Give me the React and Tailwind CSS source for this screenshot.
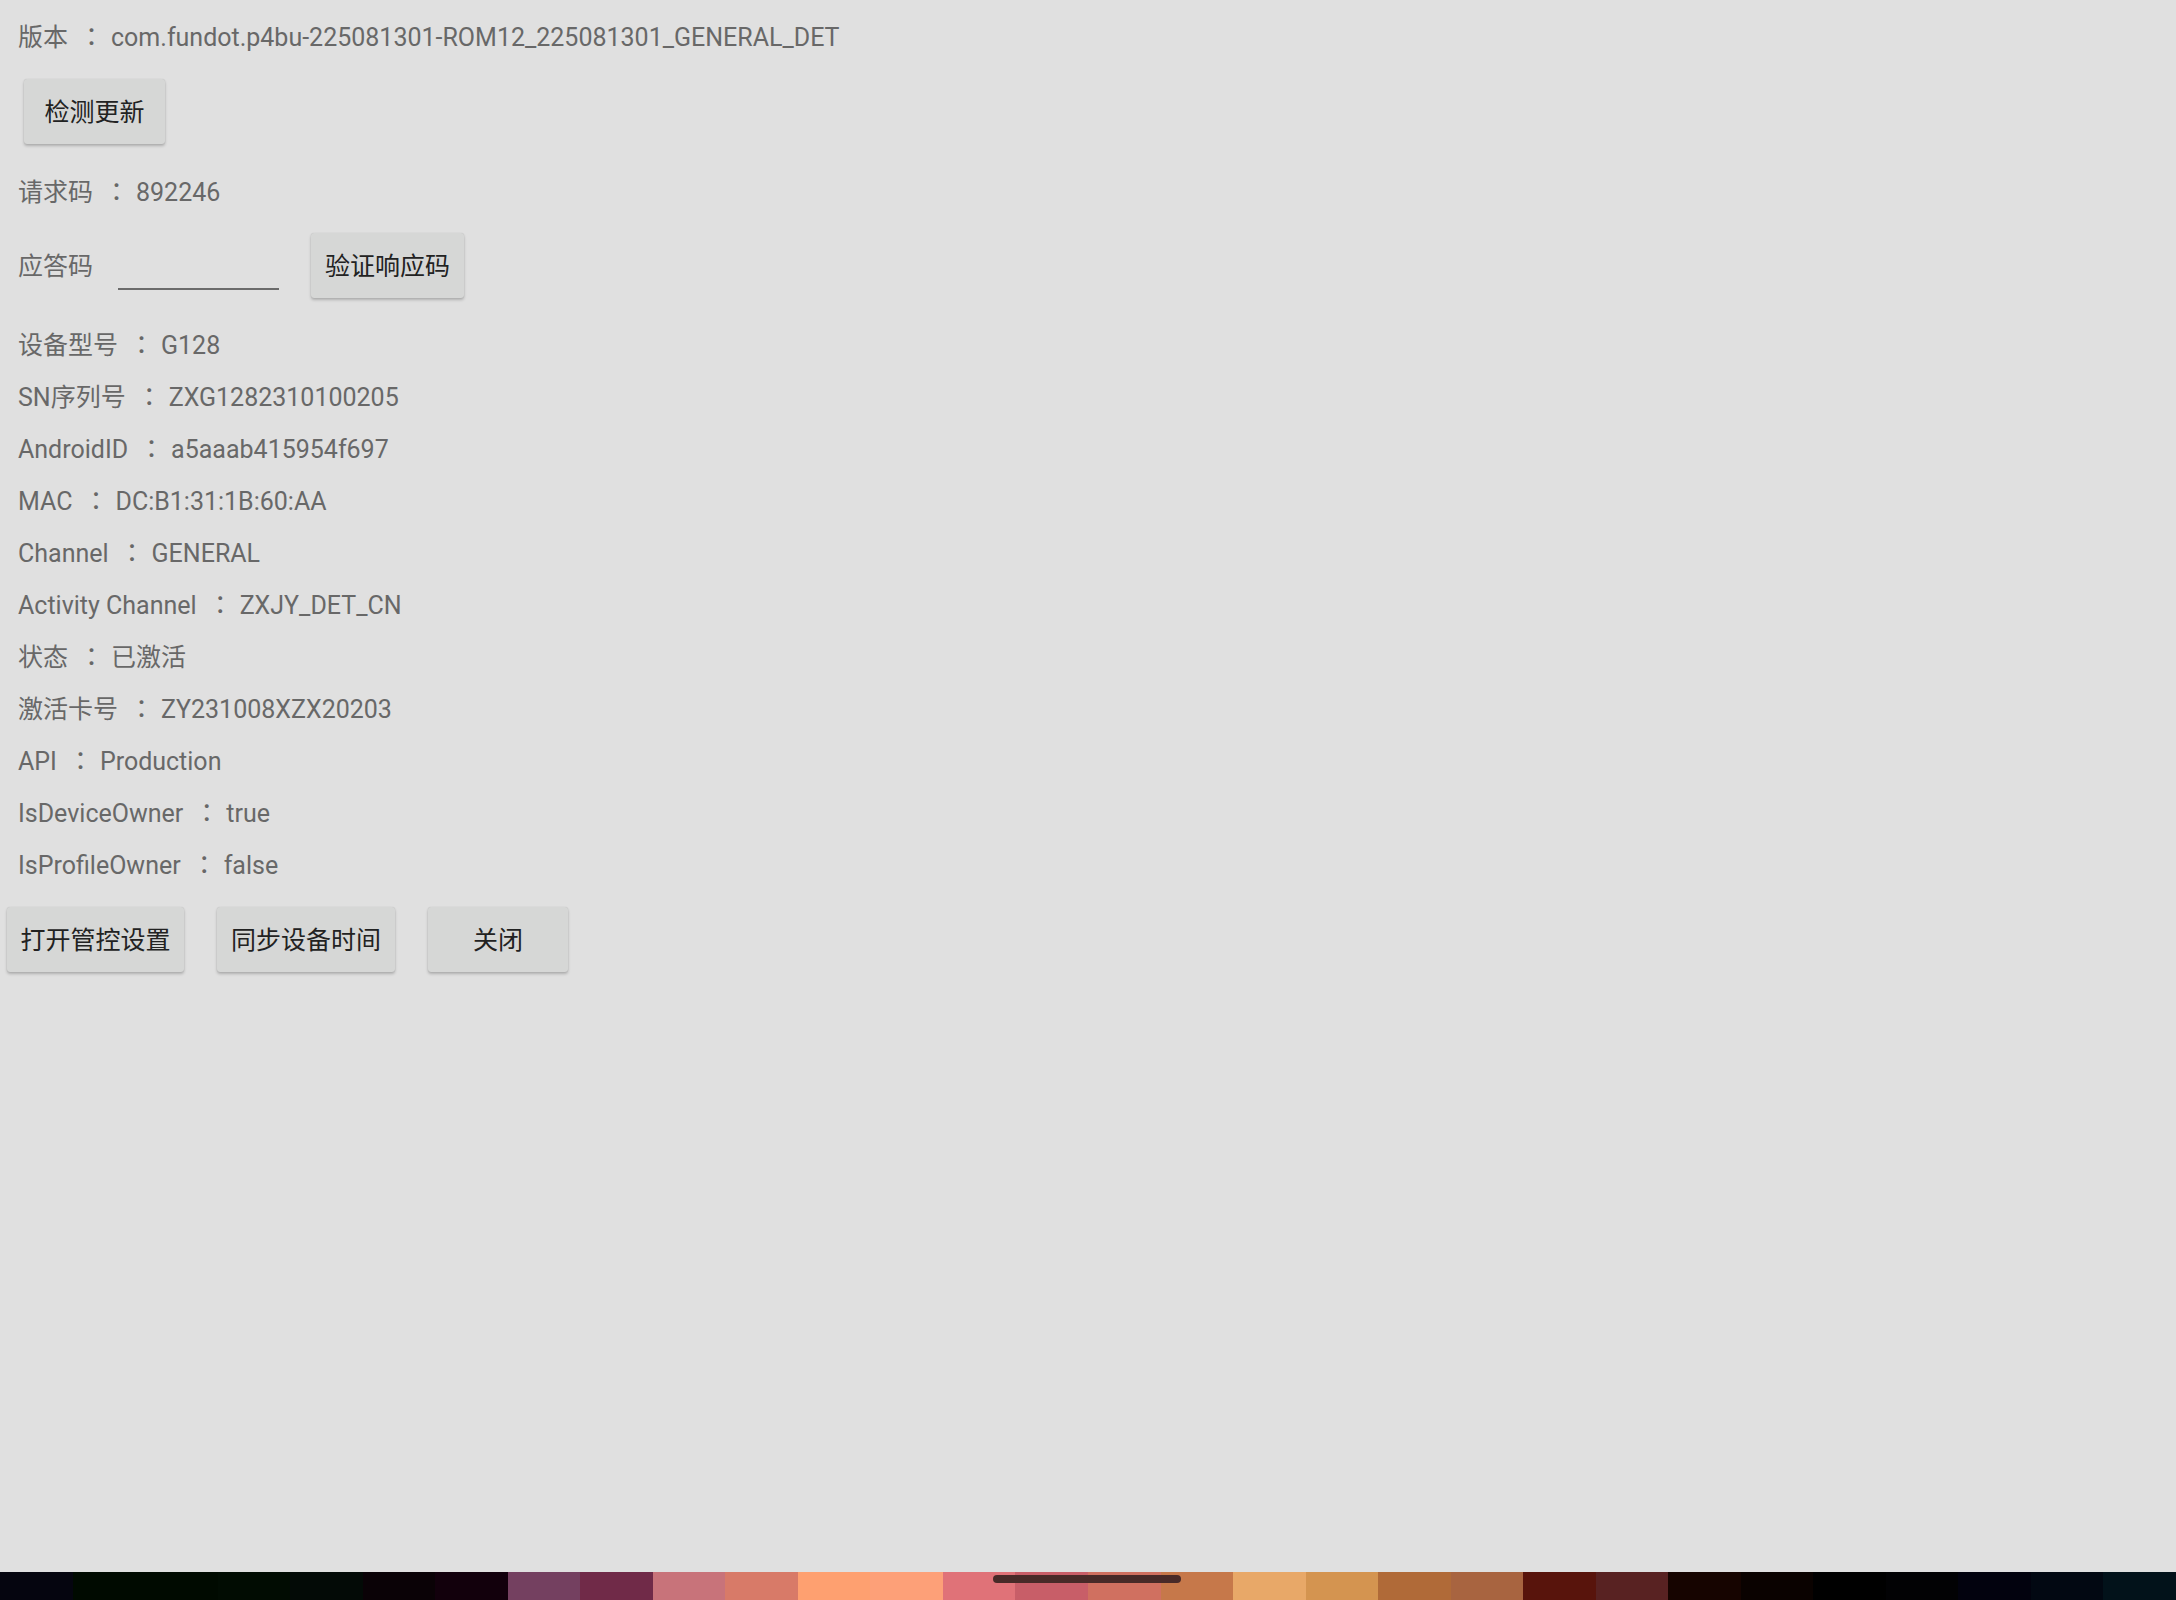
import React from "react";

// 设备信息页 — Android 管控设置
const rows = [
  ["设备型号", "G128"],
  ["SN序列号", "ZXG1282310100205"],
  ["AndroidID", "a5aaab415954f697"],
  ["MAC", "DC:B1:31:1B:60:AA"],
  ["Channel", "GENERAL"],
  ["Activity Channel", "ZXJY_DET_CN"],
  ["状态", "已激活"],
  ["激活卡号", "ZY231008XZX20203"],
  ["API", "Production"],
  ["IsDeviceOwner", "true"],
  ["IsProfileOwner", "false"],
];

const stripes = [
  "bg-[#05050f]", "bg-[#000a00]", "bg-[#000a00]", "bg-[#010c02]", "bg-[#030a06]",
  "bg-[#0a0206]", "bg-[#12000c]", "bg-[#744060]", "bg-[#702a48]", "bg-[#c8737a]",
  "bg-[#d87a68]", "bg-[#fea070]", "bg-[#fda078]", "bg-[#e07278]", "bg-[#c85e68]",
  "bg-[#d07060]", "bg-[#c6784a]", "bg-[#e8a868]", "bg-[#d49450]", "bg-[#b06a38]",
  "bg-[#a86440]", "bg-[#58140c]", "bg-[#582222]", "bg-[#160400]", "bg-[#0a0200]",
  "bg-[#000000]", "bg-[#020204]", "bg-[#02020e]", "bg-[#020812]", "bg-[#02121a]",
];

const InfoRow = ({ label, value }) => (
  <div className="h-[52px] pl-[18px] leading-[52px] whitespace-pre text-[25px] text-[#686868]">
    <span>{label}</span>
    <span className="ml-[11px] inline-block w-[25px] text-center font-['Noto_Sans_CJK_TC',sans-serif]">：</span>
    <span className="ml-[7px]">{value}</span>
  </div>
);

const Button = ({ children, className = "" }) => (
  <button
    className={`flex h-[65px] items-center justify-center rounded-[3px] bg-[#d6d7d6] pt-[3px] text-[25px] text-[#222222] shadow-[0_2px_3px_rgba(0,0,0,0.22),0_0_1px_rgba(0,0,0,0.18)] ${className}`}
  >
    {children}
  </button>
);

export default function App() {
  return (
    <div className="flex h-[1600px] w-full flex-col bg-[#e0e0e0] font-['Roboto','Noto_Sans_CJK_SC',sans-serif]">
      <div className="flex-1">
        {/* 版本 */}
        <div className="mt-[9px]">
          <InfoRow label="版本" value="com.fundot.p4bu-225081301-ROM12_225081301_GENERAL_DET" />
        </div>

        <Button className="ml-[24px] mt-[18px] w-[141px]">检测更新</Button>

        <div className="mt-[20px]">
          <InfoRow label="请求码" value="892246" />
        </div>

        {/* 应答码 输入 */}
        <div className="mt-[17px] flex h-[65px] items-center pl-[18px]">
          <span className="pt-[2px] text-[25px] text-[#686868]">应答码</span>
          <div className="ml-[25px] flex h-[65px] w-[161px] flex-col justify-end pb-[8px]">
            <div className="h-[2px] bg-[#6b6b6b]" />
          </div>
          <Button className="ml-[32px] w-[153px]">验证响应码</Button>
        </div>

        <div className="mt-[19px]">
          {rows.map(([label, value]) => (
            <InfoRow key={label} label={label} value={value} />
          ))}
        </div>

        <div className="mt-[18px] flex gap-[33px] pl-[7px]">
          <Button className="w-[177px]">打开管控设置</Button>
          <Button className="w-[178px]">同步设备时间</Button>
          <Button className="w-[140px]">关闭</Button>
        </div>
      </div>

      {/* 底部导航条 */}
      <div className="relative flex h-[28px]">
        {stripes.map((c, i) => (
          <div key={i} className={`flex-1 ${c}`} />
        ))}
        <div className="absolute left-[993px] top-[3px] h-[8px] w-[188px] rounded-full bg-[#482a28]" />
      </div>
    </div>
  );
}
